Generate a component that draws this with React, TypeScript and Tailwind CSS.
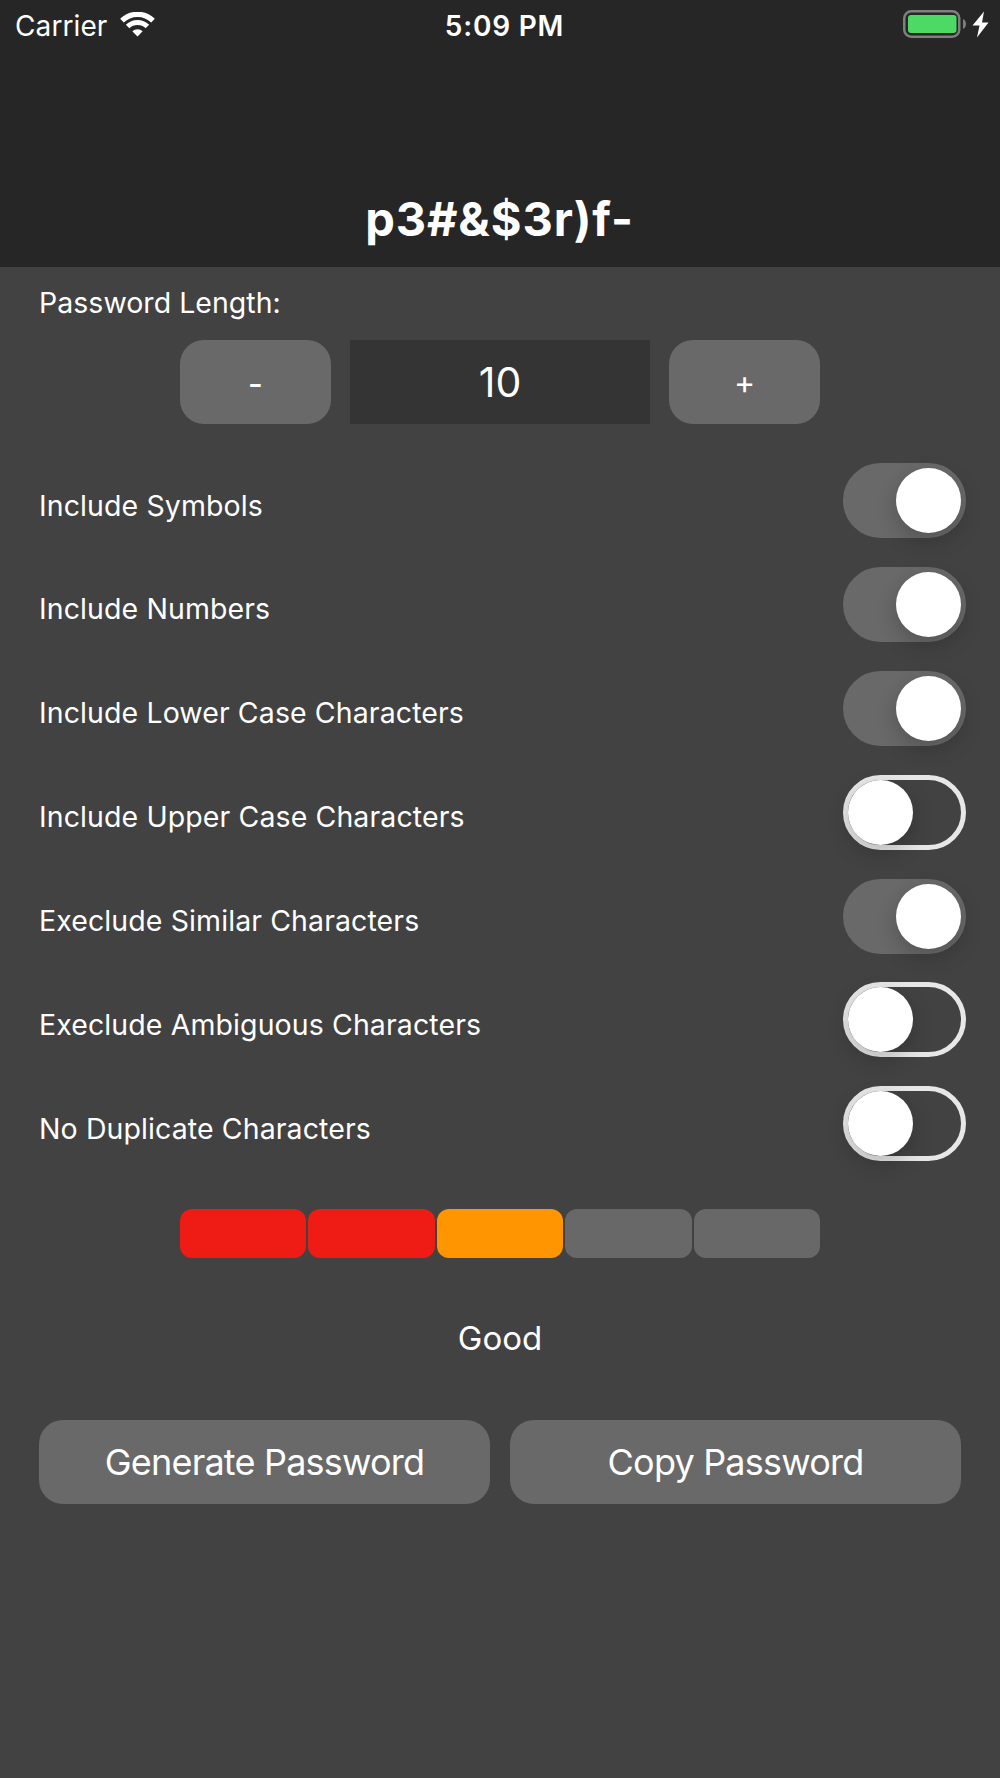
import { useState } from "react";

const options = [
  { label: "Include Symbols", on: true },
  { label: "Include Numbers", on: true },
  { label: "Include Lower Case Characters", on: true },
  { label: "Include Upper Case Characters", on: false },
  { label: "Execlude Similar Characters", on: true },
  { label: "Execlude Ambiguous Characters", on: false },
  { label: "No Duplicate Characters", on: false },
];

const strength = ["bg-[#ee1c14]", "bg-[#ee1c14]", "bg-[#ff9500]", "bg-[#686868]", "bg-[#686868]"];

export default function App() {
  const [toggles, setToggles] = useState(options.map((o) => o.on));
  const [length, setLength] = useState(10);

  const flip = (i: number) => setToggles(toggles.map((t, n) => (n === i ? !t : t)));

  return (
    <div className="flex h-[1778px] w-[1000px] flex-col overflow-hidden bg-[#424242] font-['Inter',sans-serif] text-white">
      <header className="flex h-[267px] shrink-0 flex-col bg-[#262626]">
        <StatusBar />
        <h1 className="mt-[131px] pr-px text-center text-[47px] leading-[76px] font-bold tracking-[0.9px]">
          p3#&amp;$3r)f-
        </h1>
      </header>

      <main className="flex flex-col px-[39px]">
        <div className="mt-4 text-[28.5px] leading-10 tracking-[0.03px]">Password Length:</div>

        {/* Length stepper */}
        <div className="mt-[17px] flex justify-center gap-[19px]">
          <button
            className="h-[84px] w-[151px] rounded-3xl bg-[#696969] pt-[3px] text-[32px] font-medium"
            onClick={() => setLength(length - 1)}
          >
            -
          </button>
          <div className="flex h-[84px] w-[300px] items-center justify-center bg-[#343434] pt-[2px] text-[41px]">
            {length}
          </div>
          <button
            className="h-[84px] w-[151px] rounded-3xl bg-[#696969] pt-[2px] text-[32px]"
            onClick={() => setLength(length + 1)}
          >
            +
          </button>
        </div>

        <div className="mt-[39px] -mr-[5px] flex flex-col gap-[28.9px]">
          {options.map((o, i) => (
            <div key={o.label} className="flex h-[75px] items-center justify-between">
              <span className="pt-[10px] text-[28.5px] leading-10 tracking-[0.1px]">{o.label}</span>
              <Toggle on={toggles[i]} onClick={() => flip(i)} />
            </div>
          ))}
        </div>

        {/* Strength meter */}
        <div className="mx-auto mt-[47.4px] flex w-[640px] gap-[2px]">
          {strength.map((color, i) => (
            <div key={i} className={`h-[49px] flex-1 rounded-xl ${color}`} />
          ))}
        </div>
        <div className="mt-[55px] text-center text-[33px] leading-[50px]">Good</div>

        <div className="mt-[57px] flex gap-5">
          <button className="h-[84px] flex-1 rounded-3xl bg-[#696969] pt-px text-[36px] tracking-[-0.8px]">
            Generate Password
          </button>
          <button className="h-[84px] flex-1 rounded-3xl bg-[#696969] pt-px text-[36px] tracking-[-0.8px]">
            Copy Password
          </button>
        </div>
      </main>
    </div>
  );
}

function Toggle({ on, onClick }: { on: boolean; onClick: () => void }) {
  return (
    <button
      role="switch"
      aria-checked={on}
      onClick={onClick}
      className={`flex h-[75px] w-[123px] items-center rounded-full border-[5px] ${
        on ? "justify-end border-[#696969] bg-[#696969]" : "justify-start border-[#e7e7e7]"
      }`}
    >
      <span className="size-[65px] rounded-full bg-white shadow-[0_8px_21px_rgba(0,0,0,0.2)]" />
    </button>
  );
}

function StatusBar() {
  return (
    <div className="grid h-[50px] grid-cols-3 items-center pr-[11px] pl-[15px]">
      <div className="flex items-center gap-[13px]">
        <span className="pt-px text-[28px] leading-[50px] tracking-[0.1px]">Carrier</span>
        <svg className="mb-[3px] h-[25px] w-[35px]" viewBox="0 0 35 25" fill="none" stroke="#fff">
          <path d="M2 8.700a22 22 0 0 1 31 0" strokeWidth="5.2" />
          <path d="M7.6 14.500a14.2 14.2 0 0 1 19.8 0" strokeWidth="5" />
          <path d="M12.3 19.300a7.5 7.5 0 0 1 10.4 0L17.5 24.500z" fill="#fff" stroke="none" />
        </svg>
      </div>
      <div className="pt-px pl-[5px] text-center text-[28px] font-semibold tracking-[0.8px]">5:09 PM</div>
      <div className="flex items-center justify-end pb-[3px]">
        <svg className="h-7 w-[86px]" viewBox="0 0 86 28">
          <rect x="1.25" y="1.25" width="55" height="25.5" rx="7" fill="none" stroke="#7f7f7f" strokeWidth="2.5" />
          <rect x="5" y="5" width="48.5" height="18" rx="3" fill="#4cd964" />
          <path d="M60 9c4 1.5 4 8.500 0 10z" fill="#7f7f7f" />
          <path d="M81 1.500L69.500 15.500h7L74 27.500l11.500-15H79z" fill="#fff" />
        </svg>
      </div>
    </div>
  );
}
